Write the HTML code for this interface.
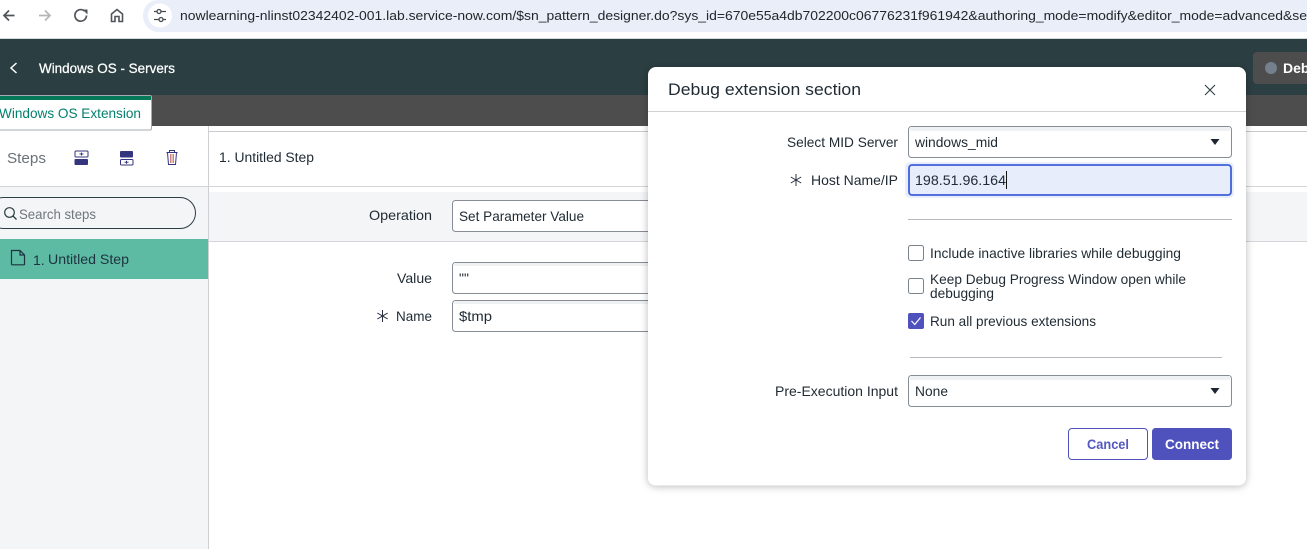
<!DOCTYPE html>
<html><head><meta charset="utf-8"><style>
html,body{margin:0;padding:0;background:#fff;overflow:hidden}
svg{display:block}
text{font-family:"Liberation Sans",sans-serif;font-size:14px;fill:#1f2a33;white-space:pre}
</style></head><body>
<svg width="1307" height="549" viewBox="0 0 1307 549" xmlns="http://www.w3.org/2000/svg">
<defs>
<filter id="sh" x="-10%" y="-10%" width="120%" height="120%"><feDropShadow dx="0" dy="1" stdDeviation="4" flood-color="#000" flood-opacity=".28"/></filter>
<g id="star"><path d="M0-6V6M-5.200-3L5.200 3M5.200-3L-5.200 3" stroke="#2a3040" stroke-width="1" fill="none"/></g>
</defs>
<rect width="1307" height="549" fill="#fff"/>
<!-- browser bar -->
<rect x="0" y="38" width="1307" height="1" fill="#d5d8dc"/>
<path d="M143 15.500C143 6 150 0 158 0H1307V32H158C150 32 143 25 143 15.500Z" fill="#e9eef8"/>
<circle cx="160" cy="15.500" r="12" fill="#fff"/>
<g fill="none" stroke="#454a50" stroke-width="1.300">
<path d="M154 11.500h3M161 11.500h5M154 19.500h5M163 19.500h3"/><circle cx="159" cy="11.500" r="2"/><circle cx="161" cy="19.500" r="2"/>
</g>
<path d="M14.500 15.500H4.500M9 10.500L4 15.500L9 20.500" fill="none" stroke="#50555a" stroke-width="1.700"/>
<path d="M39 15.500H50M45 10.500L50 15.500L45 20.500" fill="none" stroke="#b4b7ba" stroke-width="1.700"/>
<path d="M86.500 15.500A5.800 5.800 0 1 1 84.500 11" fill="none" stroke="#50555a" stroke-width="1.700"/><path d="M82.500 9.500H87.500V14.500Z" fill="#50555a"/>
<path d="M111.500 21.500V14L117 9.500L122.500 14V21.500H119V16.500H115V21.500Z" fill="none" stroke="#50555a" stroke-width="1.600"/>
<text x="180" y="20" style="font-size:13.300px;fill:#22272c" textLength="1127" lengthAdjust="spacingAndGlyphs">nowlearning-nlinst02342402-001.lab.service-now.com/$sn_pattern_designer.do?sys_id=670e55a4db702200c06776231f961942&amp;authoring_mode=modify&amp;editor_mode=advanced&amp;se</text>

<!-- header -->
<rect x="0" y="39" width="1307" height="56" fill="#2b3e42"/>
<rect x="0" y="95" width="1307" height="31" fill="#4d4d4d"/>
<path d="M16.500 63L11 68L16.500 73" fill="none" stroke="#fff" stroke-width="1.500"/>
<text x="39" y="73" style="font-size:14px;fill:#fff;stroke:#fff;stroke-width:.25px" textLength="136" lengthAdjust="spacingAndGlyphs">Windows OS - Servers</text>
<rect x="1253" y="52" width="60" height="32" rx="4" fill="#4d4d4d"/>
<circle cx="1271" cy="68" r="6" fill="#757f8d"/>
<text x="1283" y="73" style="font-size:14px;font-weight:bold;fill:#fff">Deb</text>

<!-- body -->
<rect x="0" y="126" width="209" height="423" fill="#fff"/>
<rect x="0" y="186" width="208" height="363" fill="#f4f5f7"/>
<rect x="208" y="126" width="1" height="423" fill="#cdcfd2"/>
<rect x="209" y="131" width="1098" height="1" fill="#c8cacd"/>
<rect x="0" y="186" width="1307" height="1" fill="#d4d5d8"/>
<rect x="209" y="192" width="1098" height="49" fill="#f4f5f7"/>
<rect x="209" y="241" width="1098" height="1" fill="#d4d5d8"/>

<!-- tab -->
<rect x="-2" y="95.500" width="153.500" height="34.500" rx="1.500" fill="#fff" stroke="#a6abb0"/>
<rect x="0" y="96" width="151" height="4" fill="#047857"/>
<text x="-1" y="118" style="font-size:14px;fill:#047f6e" textLength="142" lengthAdjust="spacingAndGlyphs">Windows OS Extension</text>

<!-- steps toolbar -->
<text x="7" y="163" style="font-size:15px;fill:#6b7178" textLength="39" lengthAdjust="spacingAndGlyphs">Steps</text>
<g fill="#35357f">
<rect x="75" y="151" width="13" height="6" rx="1" fill="#fff" stroke="#35357f"/>
<path d="M79.500 154h4M81.500 152.500v3" stroke="#35357f" stroke-width="1" fill="none"/>
<rect x="74.500" y="159" width="13.500" height="6" rx="1"/>
<rect x="120" y="151" width="13" height="6.500" rx="1"/>
<rect x="120.500" y="159.500" width="12.500" height="5.500" rx="1" fill="#fff" stroke="#35357f"/>
<path d="M124.500 162.300h4M126.500 160.800v3" stroke="#35357f" stroke-width="1" fill="none"/>
</g>
<g fill="none" stroke="#35357f" stroke-width="1">
<path d="M166.500 152.500H177.500M169.500 152.500V150.500H174.500V152.500M167.500 152.500L168.500 164.500H175.500L176.500 152.500"/>
</g>
<path d="M170.500 154V163M172 154V163M173.500 154V163" stroke="#c9827f" stroke-width="1"/>
<text x="219" y="162" style="font-size:13.500px;fill:#1f2a33" textLength="95" lengthAdjust="spacingAndGlyphs">1. Untitled Step</text>

<!-- search -->
<rect x="-12" y="197.500" width="207.500" height="31" rx="15.500" fill="#f4f5f7" stroke="#2b3e42"/>
<circle cx="9.500" cy="212.500" r="4.800" fill="none" stroke="#2b3e42" stroke-width="1.200"/>
<path d="M13 216L16.500 219.500" stroke="#2b3e42" stroke-width="1.300"/>
<text x="19" y="219" style="font-size:14px;fill:#6f767d" textLength="77" lengthAdjust="spacingAndGlyphs">Search steps</text>

<!-- step row -->
<rect x="0" y="239" width="208" height="40" fill="#5dbaa3"/>
<path d="M11.500 250.500H20L24.500 255V264.500A.8.8 0 0 1 23.700 264.800H12.300A.8.8 0 0 1 11.500 264V250.500ZM20 250.500V255H24.500" fill="none" stroke="#1e3340" stroke-width="1.200"/>
<text x="33" y="265" style="font-size:14px;fill:#1e3340">1.</text>
<text x="48" y="264" style="font-size:14px;fill:#1e3340" textLength="81" lengthAdjust="spacingAndGlyphs">Untitled Step</text>

<!-- form -->
<text x="369" y="220" style="font-size:14px" textLength="63" lengthAdjust="spacingAndGlyphs">Operation</text>
<text x="397" y="283" style="font-size:14px" textLength="35" lengthAdjust="spacingAndGlyphs">Value</text>
<use href="#star" x="382.500" y="316"/>
<text x="396" y="321" style="font-size:14px" textLength="36" lengthAdjust="spacingAndGlyphs">Name</text>
<g fill="#fff" stroke="#868d97">
<rect x="452.500" y="200.500" width="240" height="31" rx="3"/>
<rect x="452.500" y="262.500" width="240" height="31" rx="3"/>
<rect x="452.500" y="300.500" width="240" height="31" rx="3"/>
</g>
<rect x="454" y="263" width="200" height="3" fill="#f0f1f2"/>
<rect x="454" y="301" width="200" height="3" fill="#f0f1f2"/>
<text x="459" y="221" style="font-size:14px" textLength="125" lengthAdjust="spacingAndGlyphs">Set Parameter Value</text>
<text x="459" y="283" style="font-size:14px">""</text>
<text x="459" y="321" style="font-size:14px" textLength="33" lengthAdjust="spacingAndGlyphs">$tmp</text>

<!-- modal -->
<rect x="648" y="67" width="598" height="418.500" rx="8" fill="#fff" filter="url(#sh)"/>
<text x="668" y="95" style="font-size:17px;fill:#1f2a33" textLength="193" lengthAdjust="spacingAndGlyphs">Debug extension section</text>
<path d="M1205 85L1215 95M1215 85L1205 95" stroke="#2b3e42" stroke-width="1.100"/>
<rect x="648" y="111" width="598" height="1" fill="#d0d2d5"/>

<text x="787" y="147" style="font-size:14px" textLength="111" lengthAdjust="spacingAndGlyphs">Select MID Server</text>
<rect x="908.500" y="126.500" width="323" height="31" rx="3" fill="#fff" stroke="#868d97"/>
<rect x="910" y="127" width="320" height="4" fill="#f0f1f2"/>
<text x="915" y="147" style="font-size:14px" textLength="83" lengthAdjust="spacingAndGlyphs">windows_mid</text>
<path d="M1210.500 139H1219.500L1215 145Z" fill="#1d2530"/>

<use href="#star" x="796" y="180"/>
<text x="811" y="185" style="font-size:14px" textLength="87" lengthAdjust="spacingAndGlyphs">Host Name/IP</text>
<rect x="905" y="162" width="329" height="36" rx="5" fill="#e9eefb"/>
<rect x="909" y="165" width="322" height="30" rx="3" fill="#e7edfb" stroke="#3f5fd8" stroke-width="1.800"/>
<text x="915" y="185" style="font-size:14px" textLength="91" lengthAdjust="spacingAndGlyphs">198.51.96.164</text>
<rect x="1006" y="171" width="1" height="18" fill="#111"/>

<rect x="908" y="219" width="324" height="1" fill="#b6b8be"/>

<rect x="908.500" y="245.500" width="15" height="15" rx="2" fill="#fff" stroke="#7d838c"/>
<text x="930" y="258" style="font-size:14px" textLength="251" lengthAdjust="spacingAndGlyphs">Include inactive libraries while debugging</text>
<rect x="908.500" y="278.500" width="15" height="15" rx="2" fill="#fff" stroke="#7d838c"/>
<text x="930" y="284" style="font-size:14px" textLength="256" lengthAdjust="spacingAndGlyphs">Keep Debug Progress Window open while</text>
<text x="930" y="298" style="font-size:14px" textLength="64" lengthAdjust="spacingAndGlyphs">debugging</text>
<rect x="908" y="313" width="16" height="16" rx="2" fill="#4f52bd"/>
<path d="M911.500 321L914.800 324.500L920.500 317.500" fill="none" stroke="#fff" stroke-width="1.200"/>
<text x="930" y="326" style="font-size:14px" textLength="166" lengthAdjust="spacingAndGlyphs">Run all previous extensions</text>

<rect x="910" y="357" width="312" height="1" fill="#b6b8be"/>

<text x="775" y="396" style="font-size:14px" textLength="123" lengthAdjust="spacingAndGlyphs">Pre-Execution Input</text>
<rect x="908.500" y="375.500" width="323" height="31" rx="3" fill="#fff" stroke="#868d97"/>
<rect x="910" y="376" width="320" height="4" fill="#f0f1f2"/>
<text x="915" y="396" style="font-size:14px" textLength="33" lengthAdjust="spacingAndGlyphs">None</text>
<path d="M1210.500 388H1219.500L1215 394Z" fill="#1d2530"/>

<rect x="1068.500" y="428.500" width="79" height="31" rx="3.500" fill="#fff" stroke="#4f52bd"/>
<text x="1087" y="449" style="font-size:14px;font-weight:bold;fill:#5558c0" textLength="42" lengthAdjust="spacingAndGlyphs">Cancel</text>
<rect x="1152" y="428" width="80" height="32" rx="3.500" fill="#4f52bd"/>
<text x="1165" y="449" style="font-size:14px;font-weight:bold;fill:#fff" textLength="54" lengthAdjust="spacingAndGlyphs">Connect</text>
</svg>
</body></html>
